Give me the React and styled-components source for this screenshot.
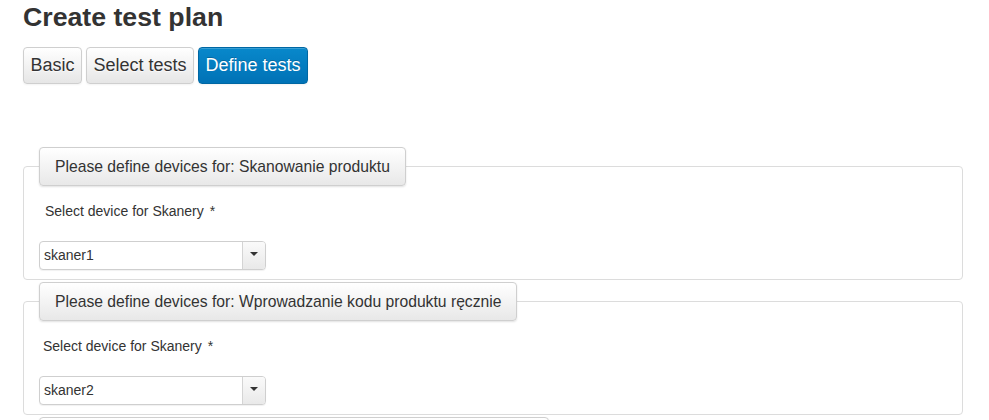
import React from 'react';
import styled, { createGlobalStyle } from 'styled-components';

const GlobalStyle = createGlobalStyle`
  body {
    margin: 0;
    background: #fff;
    font-family: "Liberation Sans", Arial, Helvetica, sans-serif;
    color: #333;
  }
`;

const steps = ['Basic', 'Select tests', 'Define tests'];

const groups = [
  { title: 'Please define devices for: Skanowanie produktu', label: 'Select device for Skanery', value: 'skaner1', indent: 6 },
  { title: 'Please define devices for: Wprowadzanie kodu produktu ręcznie', label: 'Select device for Skanery', value: 'skaner2', indent: 4 },
  { title: 'Please define devices for: Wprowadzanie kodu produktu z klawiatury', label: 'Select device for Skanery', value: 'skaner1', indent: 4 },
];

const App = () => {
  return (
    <Page>
      <GlobalStyle />
      <Title>Create test plan</Title>
      <Steps>
        {steps.map((s, i) => (
          <StepButton key={s} active={i === steps.length - 1}>{s}</StepButton>
        ))}
      </Steps>
      <Groups>
        {groups.map((g, i) => (
          <DeviceSet key={i}>
            <Legend>{g.title}</Legend>
            <Label indent={g.indent}>{g.label}<Required>*</Required></Label>
            <Select>
              <SelectValue>{g.value}</SelectValue>
              <SelectArrow><Caret /></SelectArrow>
            </Select>
          </DeviceSet>
        ))}
      </Groups>
    </Page>
  );
};

export default App;

// Styled Components:

const Page = styled.div`
  padding: 0 26px 0 23px;
  height: 420px;
  overflow: hidden;
`;
const Title = styled.h2`
  margin: 0;
  font-size: 26.7px;
  line-height: 34px;
  font-weight: bold;
  color: #333;
`;
const Steps = styled.div`
  display: flex;
  gap: 4px;
  margin-top: 13px;
`;
const StepButton = styled.button`
  font-family: inherit;
  font-size: 18px;
  line-height: 25px;
  padding: 5px 6.5px;
  border-radius: 4px;
  cursor: pointer;
  border: 1px solid ${p => (p.active ? '#0067a3' : '#cfcfcf')};
  color: ${p => (p.active ? '#fff' : '#333')};
  background: ${p => (p.active
    ? 'linear-gradient(#0888cb, #0072b6)'
    : 'linear-gradient(#ffffff, #e6e6e6)')};
  text-shadow: ${p => (p.active ? '0 -1px 0 rgba(0,0,0,.2)' : '0 1px 1px rgba(255,255,255,.75)')};
  box-shadow: inset 0 1px 0 rgba(255,255,255,.2), 0 1px 2px rgba(0,0,0,.05);
`;
const Groups = styled.div`
  margin-top: 63px;
  display: flex;
  flex-direction: column;
  gap: 2px;
`;
const DeviceSet = styled.fieldset`
  margin: 0;
  padding: 0 15px 9px;
  border: 1px solid #dcdcdc;
  border-radius: 4px;
  min-width: 0;
`;
const Legend = styled.legend`
  font-size: 15.7px;
  line-height: 21px;
  padding: 8px 15px;
  color: #333;
  border: 1px solid #cfcfcf;
  border-radius: 4px;
  background: linear-gradient(#ffffff, #e8e8e8);
  box-shadow: 0 1px 2px rgba(0,0,0,.12);
  white-space: nowrap;
`;
const Label = styled.div`
  margin-top: 15px;
  padding-left: ${p => p.indent}px;
  font-size: 14px;
  line-height: 20px;
  color: #333;
`;
const Required = styled.span`
  margin-left: 6px;
`;
const Select = styled.div`
  margin-top: 20px;
  width: 227px;
  height: 29px;
  box-sizing: border-box;
  display: flex;
  border: 1px solid #cfcfcf;
  border-radius: 4px;
  background: #fff;
  box-shadow: 0 1px 1px rgba(0,0,0,.06);
`;
const SelectValue = styled.div`
  flex: 1;
  padding-left: 4px;
  font-size: 14px;
  line-height: 27px;
  color: #333;
`;
const SelectArrow = styled.div`
  width: 23px;
  border-left: 1px solid #d4d4d4;
  border-radius: 0 3px 3px 0;
  background: linear-gradient(#fafafa, #e9e9e9);
  display: flex;
  justify-content: center;
  padding-top: 10px;
  box-sizing: border-box;
`;
const Caret = styled.span`
  width: 0;
  height: 0;
  border-left: 4px solid transparent;
  border-right: 4px solid transparent;
  border-top: 4px solid #333;
`;
